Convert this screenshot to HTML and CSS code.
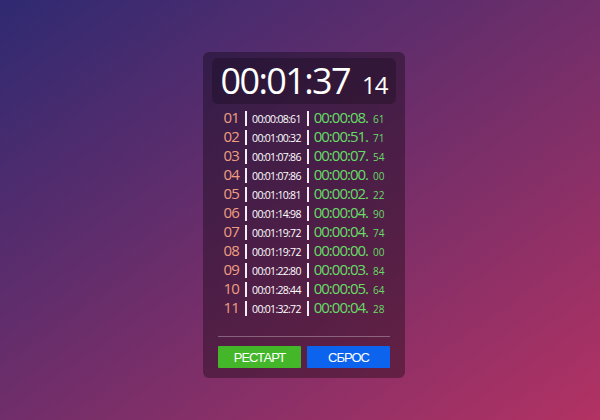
FILE: index.html
```html
<!DOCTYPE html>
<html lang="ru">
<head>
<meta charset="utf-8">
<link rel="stylesheet" href="styles.css">
</head>
<body>
<div class="card">
  <div class="timer"><span class="main">00:01:37</span><span class="ms">14</span></div>
  <div class="laps">
    <div class="lap"><span class="idx">01</span><span class="bar"></span><span class="total">00:00:08:61</span><span class="bar"></span><span class="diff">00:00:08.</span><span class="dms">61</span></div>
    <div class="lap"><span class="idx">02</span><span class="bar"></span><span class="total">00:01:00:32</span><span class="bar"></span><span class="diff">00:00:51.</span><span class="dms">71</span></div>
    <div class="lap"><span class="idx">03</span><span class="bar"></span><span class="total">00:01:07:86</span><span class="bar"></span><span class="diff">00:00:07.</span><span class="dms">54</span></div>
    <div class="lap"><span class="idx">04</span><span class="bar"></span><span class="total">00:01:07:86</span><span class="bar"></span><span class="diff">00:00:00.</span><span class="dms">00</span></div>
    <div class="lap"><span class="idx">05</span><span class="bar"></span><span class="total">00:01:10:81</span><span class="bar"></span><span class="diff">00:00:02.</span><span class="dms">22</span></div>
    <div class="lap"><span class="idx">06</span><span class="bar"></span><span class="total">00:01:14:98</span><span class="bar"></span><span class="diff">00:00:04.</span><span class="dms">90</span></div>
    <div class="lap"><span class="idx">07</span><span class="bar"></span><span class="total">00:01:19:72</span><span class="bar"></span><span class="diff">00:00:04.</span><span class="dms">74</span></div>
    <div class="lap"><span class="idx">08</span><span class="bar"></span><span class="total">00:01:19:72</span><span class="bar"></span><span class="diff">00:00:00.</span><span class="dms">00</span></div>
    <div class="lap"><span class="idx">09</span><span class="bar"></span><span class="total">00:01:22:80</span><span class="bar"></span><span class="diff">00:00:03.</span><span class="dms">84</span></div>
    <div class="lap"><span class="idx">10</span><span class="bar"></span><span class="total">00:01:28:44</span><span class="bar"></span><span class="diff">00:00:05.</span><span class="dms">64</span></div>
    <div class="lap"><span class="idx">11</span><span class="bar"></span><span class="total">00:01:32:72</span><span class="bar"></span><span class="diff">00:00:04.</span><span class="dms">28</span></div>
  </div>
  <div class="divider"></div>
  <div class="buttons">
    <button class="btn restart">РЕСТАРТ</button>
    <button class="btn reset">СБРОС</button>
  </div>
</div>
</body>
</html>
```
FILE: styles.css
```css
html, body {
  margin: 0;
  height: 100%;
}
body {
  background: linear-gradient(to bottom right, #2f2a72, #702e6a 50%, #b23263);
  font-family: "Open Sans", "Noto Sans", sans-serif;
  display: flex;
  justify-content: center;
  align-items: flex-start;
  padding-left: 8px;
  box-sizing: border-box;
}
.card {
  margin-top: 52px;
  width: 184px;
  padding: 6px 9px 10px;
  background: rgba(0, 0, 0, 0.33);
  border-radius: 6px;
  display: flex;
  flex-direction: column;
}
.timer {
  height: 46px;
  background: rgba(0, 0, 0, 0.22);
  border-radius: 6px;
  display: flex;
  justify-content: center;
  align-items: baseline;
  color: #fff;
  line-height: 46px;
}
.main {
  font-size: 36px;
  letter-spacing: -1.6px;
}
.ms {
  font-size: 24px;
  letter-spacing: -1px;
  margin-left: 12px;
}
.laps {
  margin-top: 5px;
  display: flex;
  flex-direction: column;
}
.lap {
  height: 19px;
  display: flex;
  justify-content: center;
  align-items: baseline;
  line-height: 17px;
  white-space: nowrap;
}
.idx {
  color: #ee9e80;
  font-size: 15px;
  letter-spacing: -0.8px;
}
.bar {
  display: inline-block;
  width: 0;
  height: 15px;
  border-left: 2px solid #f4eef4;
  margin: 0 5px 0 6px;
  align-self: center;
}
.total {
  color: #fff;
  font-size: 10.5px;
  letter-spacing: -0.7px;
}
.diff {
  color: #66dc66;
  font-size: 15px;
  letter-spacing: -1px;
}
.dms {
  color: #66dc66;
  font-size: 10px;
  margin-left: 5px;
}
.divider {
  margin: 18px 6px 0;
  height: 1px;
  background: rgba(255, 255, 255, 0.3);
}
.buttons {
  margin: 9px 6px 0;
  display: flex;
  gap: 6px;
}
.btn {
  flex: 1;
  height: 22px;
  border: none;
  border-radius: 1px;
  color: #fff;
  font-family: "Liberation Sans", Arial, sans-serif;
  font-size: 13px;
  letter-spacing: -1px;
  padding: 0;
}
.restart {
  background: #43b62a;
}
.reset {
  background: #0b63ee;
}
```
